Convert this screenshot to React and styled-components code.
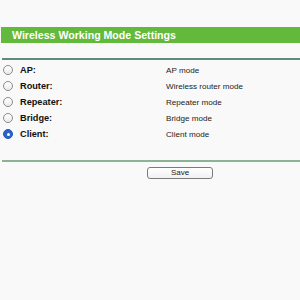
import React, { useState } from 'react';
import styled, { createGlobalStyle } from 'styled-components';

const GlobalStyle = createGlobalStyle`
    html, body {
        margin:0;
        padding:0;
        background-color:#f9f9f9;
        font-family:"Liberation Sans", Arial, sans-serif;
    }
`

const Page = styled.div`
    width:300px;
    height:300px;
    padding-top:27px;
    box-sizing:border-box;
    overflow:hidden;
`

const TitleBar = styled.div`
    margin-left:1px;
    height:16px;
    display:flex;
    align-items:center;
    padding-left:11px;
    background-color:#62b93c;
    color:white;
    font-weight:bold;
    font-size:10.6px;
`

const Divider = styled.div`
    margin-left:2px;
    height:${props => props.thick ? 2 : 1}px;
    background-color:${props => props.color};
    margin-top:${props => props.top}px;
`

const List = styled.div`
    padding-top:2px;
    display:flex;
    flex-direction:column;
`

const Row = styled.label`
    display:grid;
    grid-template-columns:20px 146px 1fr;
    align-items:center;
    height:16px;
    cursor:pointer;
`

const Radio = styled.span`
    justify-self:start;
    margin-left:3px;
    width:10px;
    height:10px;
    border-radius:50%;
    box-sizing:border-box;
    display:flex;
    align-items:center;
    justify-content:center;
    border:1px solid ${props => props.checked ? '#2358b8' : '#8d8d8d'};
    background:${props => props.checked ? '#2a64c8' : 'linear-gradient(#ffffff, #ececec)'};
    & > i {
        display:${props => props.checked ? 'block' : 'none'};
        width:3px;
        height:3px;
        border-radius:50%;
        background-color:white;
    }
`

const Label = styled.span`
    font-weight:bold;
    font-size:9.2px;
    color:#111;
`

const Value = styled.span`
    font-size:8.1px;
    color:#1c1c1c;
`

const ButtonRow = styled.div`
    display:flex;
    padding-left:147px;
    padding-top:5px;
`

const SaveButton = styled.button`
    width:66px;
    height:12px;
    padding:0;
    border:1px solid #7b7b7b;
    border-radius:3px;
    background:linear-gradient(#ffffff, #f1f1f1);
    font-family:inherit;
    font-size:8px;
    line-height:10px;
    color:#222;
`

const modes = [
    { key: 'ap', label: 'AP:', desc: 'AP mode' },
    { key: 'router', label: 'Router:', desc: 'Wireless router mode' },
    { key: 'repeater', label: 'Repeater:', desc: 'Repeater mode' },
    { key: 'bridge', label: 'Bridge:', desc: 'Bridge mode' },
    { key: 'client', label: 'Client:', desc: 'Client mode' },
]

const App = () => {
    const [mode, setMode] = useState('client');

    return (
        <Page>
            <GlobalStyle />
            <TitleBar>Wireless Working Mode Settings</TitleBar>
            <Divider top={15} color="#5f8b7c" thick />
            <List>
                {modes.map(m => (
                    <Row key={m.key} onClick={() => setMode(m.key)}>
                        <Radio checked={mode === m.key}><i /></Radio>
                        <Label>{m.label}</Label>
                        <Value>{m.desc}</Value>
                    </Row>
                ))}
            </List>
            <Divider top={18} color="#8cb296" thick />
            <ButtonRow>
                <SaveButton type="button">Save</SaveButton>
            </ButtonRow>
        </Page>
    )
}

export default App;
